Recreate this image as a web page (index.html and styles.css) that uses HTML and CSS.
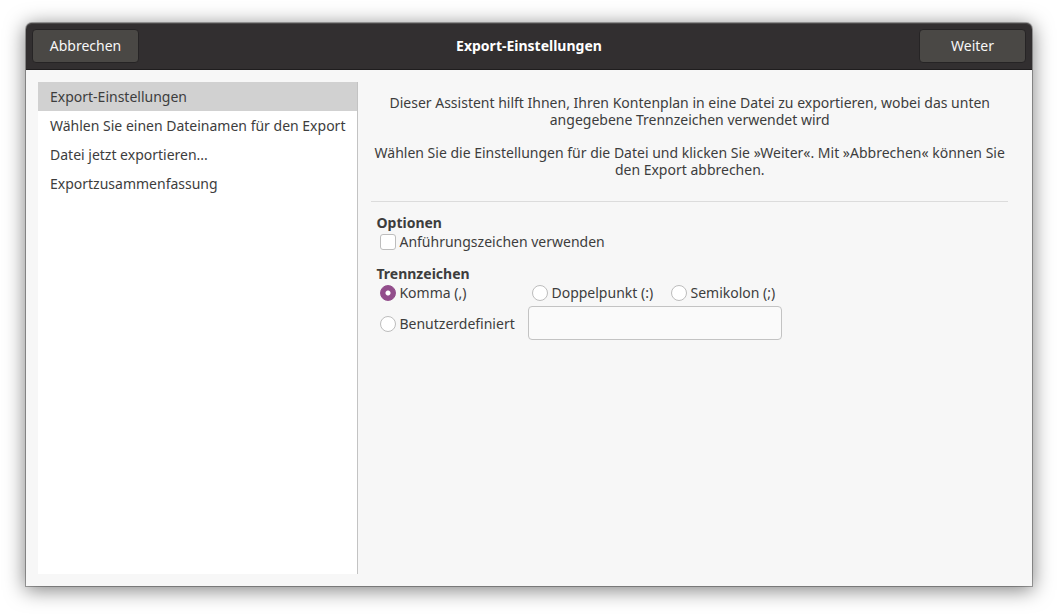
FILE: index.html
```
<!DOCTYPE html>
<html lang="de">
<head>
<meta charset="utf-8">
<title>Export-Einstellungen</title>
<link rel="stylesheet" href="styles.css">
</head>
<body>
<form class="window">
  <header class="titlebar">
    <button class="titlebar-button" type="button">Abbrechen</button>
    <h1 class="title">Export-Einstellungen</h1>
    <button class="titlebar-button" type="button">Weiter</button>
  </header>
  <div class="content">
    <ol class="steps">
      <li class="step current" aria-current="step">Export-Einstellungen</li>
      <li class="step">Wählen Sie einen Dateinamen für den Export</li>
      <li class="step">Datei jetzt exportieren...</li>
      <li class="step">Exportzusammenfassung</li>
    </ol>
    <main class="page">
      <div class="intro">
        <p class="intro-text">Dieser Assistent hilft Ihnen, Ihren Kontenplan in eine Datei zu exportieren, wobei das unten angegebene Trennzeichen verwendet wird</p>
        <p class="intro-text">Wählen Sie die Einstellungen für die Datei und klicken Sie »Weiter«. Mit »Abbrechen« können Sie den Export abbrechen.</p>
      </div>
      <fieldset class="group">
        <legend class="group-title">Optionen</legend>
        <label class="choice"><input class="check" type="checkbox">Anführungszeichen verwenden</label>
      </fieldset>
      <fieldset class="group">
        <legend class="group-title">Trennzeichen</legend>
        <div class="separators">
          <label class="choice"><input class="radio" type="radio" name="sep" checked>Komma (,)</label>
          <label class="choice"><input class="radio" type="radio" name="sep">Doppelpunkt (:)</label>
          <label class="choice"><input class="radio" type="radio" name="sep">Semikolon (;)</label>
          <label class="choice"><input class="radio" type="radio" name="sep">Benutzerdefiniert</label>
          <input class="entry" type="text" aria-label="Benutzerdefiniertes Trennzeichen">
        </div>
      </fieldset>
    </main>
  </div>
</form>
</body>
</html>
```
FILE: styles.css
```
* {
  box-sizing: border-box;
}

body {
  margin: 0;
  min-height: 100vh;
  padding: 23px 26px 29px;
  display: flex;
  background: #fff;
  color: #3d3d3d;
  font: 14px/17px "Noto Sans", "Open Sans", sans-serif;
}

.window {
  flex: 1;
  display: flex;
  flex-direction: column;
  background: #f7f7f7;
  border-radius: 6px 6px 0 0;
  box-shadow: 0 0 0 1px rgba(0, 0, 0, 0.3), 0 3px 20px 1px rgba(0, 0, 0, 0.5);
}

.titlebar {
  display: grid;
  grid-template-columns: 107px 1fr 107px;
  align-items: center;
  padding: 6px;
  background: #322f30;
  border-bottom: 1px solid #1f1d1e;
  border-radius: 6px 6px 0 0;
  box-shadow: inset 0 1px #4b4949;
  color: #fff;
}

.title {
  margin: 0;
  padding-bottom: 2px;
  font-size: 14px;
  line-height: 17px;
  text-align: center;
}

.titlebar-button {
  height: 34px;
  padding: 0 8px 2px;
  border: 1px solid #262425;
  border-radius: 4px;
  background: #4a4845;
  color: #f7f7f7;
  font: inherit;
}

.content {
  flex: 1;
  display: flex;
  gap: 13px;
  padding: 12px 24px 12px 12px;
}

.steps {
  flex: 0 0 320px;
  margin: 0;
  padding: 0;
  list-style: none;
  background: #fff;
  border-right: 1px solid #c3c3c3;
}

.step {
  padding: 6px 12px;
  white-space: nowrap;
}

.current {
  background: #d1d1d1;
}

.page {
  flex: 1;
  min-width: 0;
}

.intro {
  display: grid;
  gap: 16px;
  padding: 12px 0 23px;
  margin-bottom: 12px;
  border-bottom: 1px solid #dcdcdc;
  text-align: center;
}

.intro-text {
  margin: 0;
}

.group {
  margin: 0 0 14px;
  padding: 0 0 0 5px;
  border: 0;
}

.group-title {
  padding: 0;
  font-weight: bold;
}

.choice {
  display: flex;
  align-items: center;
  gap: 3px;
  height: 20px;
  padding-left: 4px;
  white-space: nowrap;
}

.check,
.radio {
  appearance: none;
  flex: none;
  width: 16px;
  height: 16px;
  margin: 2px 0 0;
  border: 1px solid #bdbdbd;
  background: #fff;
}

.check {
  border-radius: 3px;
}

.radio {
  border-radius: 50%;
}

.radio:checked {
  border-color: #924d8b;
  background: radial-gradient(circle, #fff 2px, #924d8b 3px);
}

.separators {
  display: grid;
  grid-template-columns: 152px 139px 115px;
  row-gap: 4px;
  align-items: center;
}

.entry {
  grid-column: 2 / 4;
  height: 34px;
  padding: 0 8px;
  border: 1px solid #c3c3c3;
  border-radius: 4px;
  background: #fafafa;
  color: inherit;
  font: inherit;
}
```
